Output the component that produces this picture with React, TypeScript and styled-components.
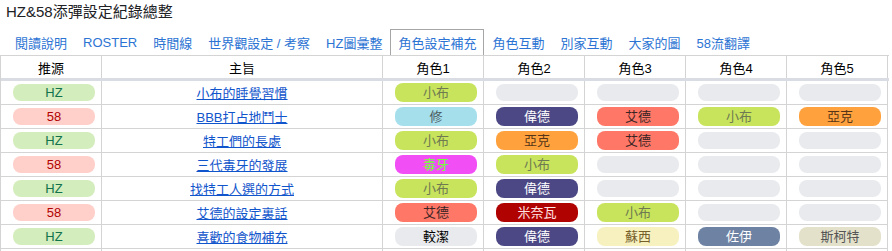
import styled, { createGlobalStyle } from 'styled-components';

const GlobalStyle = createGlobalStyle`
	body {
		margin: 0;
		background: #fff;
		font-family: 'Liberation Sans', 'Noto Sans CJK TC', sans-serif;
		color: #000;
	}
`;

const cols = '101px 281px repeat(5, 101px)';

const Title = styled.div`
	padding: 3px 6px 0;
	height: 26px;
	font-size: 15px;
	line-height: 18px;
	color: #202124;
`;

const TabBar = styled.ul`
	display: flex;
	margin: 0;
	padding: 0 0 0 7px;
	list-style: none;
	height: 26px;
`;

const Tab = styled.li<{ $active?: boolean }>`
	display: flex;
	align-items: center;
	padding: 0 ${({ $active }) => ($active ? 7 : 8)}px;
	font-size: 13px;
	color: #2c74d4;
	border: ${({ $active }) => ($active ? '1px solid #a6a6a6' : 'none')};
	border-bottom: none;
	background: #fff;
`;

const Table = styled.div`
	width: 888px;
	border-top: 1px solid #d4d4d4;
	border-left: 1px solid #d4d4d4;
`;

const HeadRow = styled.div`
	display: grid;
	grid-template-columns: ${cols};
	border-bottom: 3px solid #dadce3;
`;

const Row = styled.div`
	display: grid;
	grid-template-columns: ${cols};
`;

const HeadCell = styled.div`
	height: 22px;
	display: flex;
	align-items: center;
	justify-content: center;
	font-size: 13px;
	border-right: 1px solid #d4d4d4;
`;

const Cell = styled.div<{ $center?: boolean }>`
	height: 23px;
	display: flex;
	align-items: center;
	justify-content: ${({ $center }) => ($center ? 'center' : 'flex-start')};
	padding-left: ${({ $center }) => ($center ? 0 : 12)}px;
	border-right: 1px solid #d4d4d4;
	border-bottom: 1px solid #d4d4d4;
`;

const Topic = styled.a`
	font-size: 13px;
	color: #1155cc;
	text-decoration: underline;
	cursor: pointer;
`;

const Chip = styled.span<{ $bg: string; $fg: string; $tall?: boolean }>`
	display: flex;
	align-items: center;
	justify-content: center;
	width: 82px;
	height: ${({ $tall }) => ($tall ? 19 : 17)}px;
	border-radius: 8px;
	background: ${({ $bg }) => $bg};
	color: ${({ $fg }) => $fg};
	font-size: 13px;
	line-height: 1;
`;

const sources: Record<string, [string, string]> = {
	HZ: ['#d4edbc', '#11734b'],
	'58': ['#ffcfc9', '#b10202'],
};

const roles: Record<string, [string, string]> = {
	小布: ['#c8e45c', '#6f7a52'],
	修: ['#a6dfec', '#4b5a60'],
	偉德: ['#4c4885', '#ffffff'],
	艾德: ['#ff7767', '#3a2424'],
	亞克: ['#ffa23e', '#573617'],
	毒牙: ['#f24ef6', '#72ff3c'],
	米奈瓦: ['#b10202', '#ffe4e4'],
	蘇西: ['#f6f1bf', '#76602a'],
	佐伊: ['#6e83a3', '#ffffff'],
	斯柯特: ['#e3e1c9', '#555555'],
	較潔: ['#e8eaed', '#000000'],
};

const tabs = ['閱讀說明', 'ROSTER', '時間線', '世界觀設定 / 考察', 'HZ圖彙整', '角色設定補充', '角色互動', '別家互動', '大家的圖', '58流翻譯'];

const rows: { src: string; topic: string; cast: string[] }[] = [
	{ src: 'HZ', topic: '小布的睡覺習慣', cast: ['小布'] },
	{ src: '58', topic: 'BBB打占地鬥士', cast: ['修', '偉德', '艾德', '小布', '亞克'] },
	{ src: 'HZ', topic: '特工們的長處', cast: ['小布', '亞克', '艾德'] },
	{ src: '58', topic: '三代毒牙的發展', cast: ['毒牙', '小布'] },
	{ src: 'HZ', topic: '找特工人選的方式', cast: ['小布', '偉德'] },
	{ src: '58', topic: '艾德的設定裏話', cast: ['艾德', '米奈瓦', '小布'] },
	{ src: 'HZ', topic: '喜歡的食物補充', cast: ['較潔', '偉德', '蘇西', '佐伊', '斯柯特'] },
];

const RoleChip = ({ name }: { name?: string }) => {
	if (!name) return <Chip $bg="#e8eaed" $fg="#000" />;
	const [bg, fg] = roles[name];
	return (
		<Chip $bg={bg} $fg={fg} $tall>
			{name}
		</Chip>
	);
};

export default function App() {
	return (
		<>
			<GlobalStyle />
			<Title>HZ&amp;58添彈設定紀錄總整</Title>
			<TabBar>
				{tabs.map((t) => (
					<Tab key={t} $active={t === '角色設定補充'}>
						{t}
					</Tab>
				))}
			</TabBar>
			<Table>
				<HeadRow>
					<HeadCell>推源</HeadCell>
					<HeadCell>主旨</HeadCell>
					{[1, 2, 3, 4, 5].map((n) => (
						<HeadCell key={n}>角色{n}</HeadCell>
					))}
				</HeadRow>
				{rows.map((r) => (
					<Row key={r.topic}>
						<Cell>
							<Chip $bg={sources[r.src][0]} $fg={sources[r.src][1]}>
								{r.src}
							</Chip>
						</Cell>
						<Cell $center>
							<Topic>{r.topic}</Topic>
						</Cell>
						{[0, 1, 2, 3, 4].map((i) => (
							<Cell key={i}>
								<RoleChip name={r.cast[i]} />
							</Cell>
						))}
					</Row>
				))}
				{/* next row, only its top edge shows in the frame */}
				<Row>
					{[0, 1, 2, 3, 4, 5, 6].map((i) => (
						<Cell key={i} />
					))}
				</Row>
			</Table>
		</>
	);
}
